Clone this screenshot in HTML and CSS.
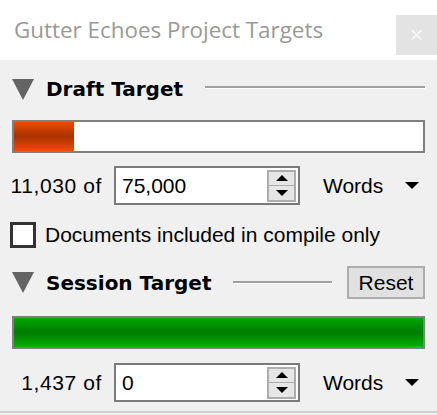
FILE: index.html
```html
<!DOCTYPE html>
<html lang="en">
<head>
    <meta charset="UTF-8">
    <meta name="viewport" content="width=device-width, initial-scale=1.0">
    <title>Project Targets</title>
    <link rel="stylesheet" href="styles.css">
</head>
<body>
    <div class="titlebar">
        <span class="title">Gutter Echoes Project Targets</span>
        <span class="closeBtn">&times;</span>
    </div>
    <div class="panel">
        <div class="header draftHeader">
            <span class="tri"></span>
            <span class="headTitle">Draft Target</span>
            <span class="rule"></span>
        </div>
        <div class="bar"><div class="fill orange" style="width: 14.6%"></div></div>
        <div class="row">
            <span class="count">11,030 of</span>
            <div class="spinbox">
                <span class="value">75,000</span>
                <span class="spin"><span class="up"></span><span class="down"></span></span>
            </div>
            <div class="combo">Words <span class="arrow"></span></div>
        </div>
        <label class="check">
            <span class="box"></span>
            Documents included in compile only
        </label>
        <div class="header sessionHeader">
            <span class="tri"></span>
            <span class="headTitle">Session Target</span>
            <span class="rule"></span>
            <button class="reset">Reset</button>
        </div>
        <div class="bar"><div class="fill green" style="width: 100%"></div></div>
        <div class="row lastRow">
            <span class="count">1,437 of</span>
            <div class="spinbox">
                <span class="value">0</span>
                <span class="spin"><span class="up"></span><span class="down"></span></span>
            </div>
            <div class="combo">Words <span class="arrow"></span></div>
        </div>
    </div>
</body>
</html>
```

FILE: styles.css
```css
body {
    margin: 0;
    font-family: "Liberation Sans", Arial, sans-serif;
    font-size: 21px;
    color: #000;
    background: #f0f0f0;
}

/* title bar */
.titlebar {
    height: 60px;
    background: #fff;
    display: flex;
    align-items: flex-start;
    justify-content: space-between;
}
.title {
    font-family: "Open Sans", sans-serif;
    font-size: 22.4px;
    color: #999;
    margin: 14px 0 0 14px;
}
.closeBtn {
    width: 41px;
    height: 40px;
    margin-top: 15px;
    background: #e3e3e3;
    color: #f6f6f6;
    font-size: 24px;
    display: flex;
    align-items: center;
    justify-content: center;
}

/* panel */
.panel {
    padding: 0 12px 0 12px;
    border-bottom: 2px solid #cfcfcf;
    height: 353px;
    box-sizing: border-box;
}

.header {
    display: flex;
    align-items: center;
}
.draftHeader { height: 30px; padding-top: 14px; }
.sessionHeader { height: 33px; margin-top: 18px; }
.tri {
    width: 0;
    height: 0;
    border-left: 11px solid transparent;
    border-right: 11px solid transparent;
    border-top: 21px solid #646464;
    margin-right: 12px;
}
.headTitle {
    font-family: "DejaVu Sans", sans-serif;
    font-size: 20px;
    font-weight: bold;
}
.rule {
    flex: 1;
    height: 2px;
    background: #a0a0a0;
    border-bottom: 1px solid #fff;
    margin-left: 22px;
}
.draftHeader .rule { margin-top: -4px; }
.sessionHeader .rule { margin-right: 15px; }

.reset {
    width: 78px;
    height: 33px;
    font: inherit;
    background: #e1e1e1;
    border: 2px solid #adadad;
    padding: 0;
}

/* progress bars */
.bar {
    height: 33px;
    margin-top: 16px;
    border: 2px solid #808080;
    background: #fff;
    box-sizing: border-box;
}
.sessionHeader + .bar { margin-top: 17px; }
.fill { height: 100%; }
.orange { background: linear-gradient(#f04a00, #a63200 50%, #f24c00); }
.green { background: linear-gradient(#00a800, #007c00 50%, #00b000); }

/* count rows */
.row {
    display: flex;
    align-items: center;
    margin-top: 13px;
    height: 39px;
}
.lastRow { margin-top: 14px; }
.count {
    width: 92px;
    text-align: right;
    margin-right: 12px;
    margin-left: -2px;
    letter-spacing: 0.6px;
}
.spinbox {
    width: 186px;
    height: 39px;
    box-sizing: border-box;
    border: 2px solid #7a7a7a;
    background: #fff;
    display: flex;
    align-items: center;
    justify-content: space-between;
    padding: 0 2px 0 6px;
}
.spin {
    width: 29px;
    height: 32px;
    box-sizing: border-box;
    border: 2px solid #adadad;
    background: #e6e6e6;
    display: flex;
    flex-direction: column;
}
.spin span {
    flex: 1;
    display: flex;
    align-items: center;
    justify-content: center;
}
.up { border-bottom: 1px solid #adadad; }
.up::before, .down::before {
    content: "";
    border-left: 6px solid transparent;
    border-right: 6px solid transparent;
}
.up::before { border-bottom: 6px solid #000; }
.down::before { border-top: 6px solid #000; }

.combo {
    flex: 1;
    display: flex;
    align-items: center;
    justify-content: space-between;
    padding-left: 23px;
    padding-right: 6px;
}
.arrow {
    border-left: 7px solid transparent;
    border-right: 7px solid transparent;
    border-top: 7px solid #000;
}

/* checkbox */
.check {
    display: flex;
    align-items: center;
    margin-top: 17px;
    margin-left: -2px;
}
.box {
    width: 26px;
    height: 26px;
    box-sizing: border-box;
    border: 3px solid #333;
    background: #fff;
    margin-right: 9px;
}
```
